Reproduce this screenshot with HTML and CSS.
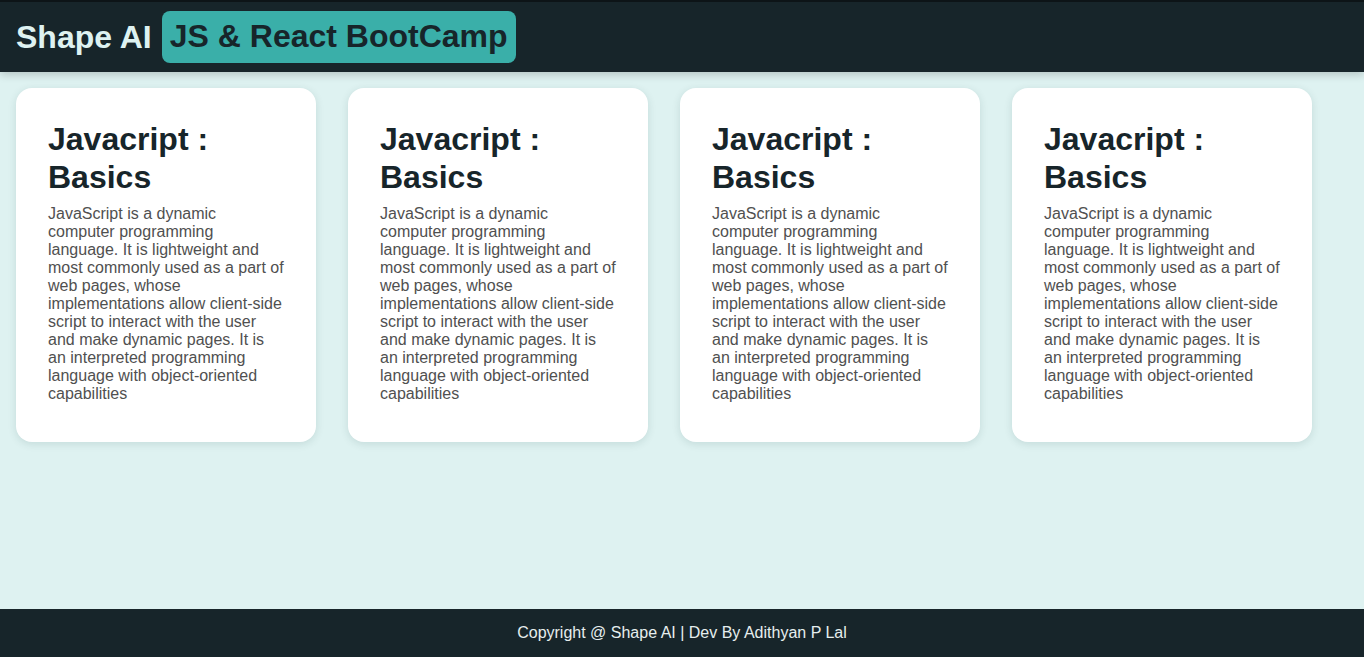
FILE: index.html
```html
<!DOCTYPE html>
<html>
<head>
<meta charset="utf-8">
<link rel="stylesheet" href="styles.css">
</head>
<body>
<header class="topbar">
  <span class="brand">Shape AI</span>
  <span class="badge">JS &amp; React BootCamp</span>
</header>
<main class="cards">
  <div class="card">
    <h1 class="card-title">Javacript : Basics</h1>
    <p class="card-text">JavaScript is a dynamic computer programming language. It is lightweight and most commonly used as a part of web pages, whose implementations allow client-side script to interact with the user and make dynamic pages. It is an interpreted programming language with object-oriented capabilities</p>
  </div>
  <div class="card">
    <h1 class="card-title">Javacript : Basics</h1>
    <p class="card-text">JavaScript is a dynamic computer programming language. It is lightweight and most commonly used as a part of web pages, whose implementations allow client-side script to interact with the user and make dynamic pages. It is an interpreted programming language with object-oriented capabilities</p>
  </div>
  <div class="card">
    <h1 class="card-title">Javacript : Basics</h1>
    <p class="card-text">JavaScript is a dynamic computer programming language. It is lightweight and most commonly used as a part of web pages, whose implementations allow client-side script to interact with the user and make dynamic pages. It is an interpreted programming language with object-oriented capabilities</p>
  </div>
  <div class="card">
    <h1 class="card-title">Javacript : Basics</h1>
    <p class="card-text">JavaScript is a dynamic computer programming language. It is lightweight and most commonly used as a part of web pages, whose implementations allow client-side script to interact with the user and make dynamic pages. It is an interpreted programming language with object-oriented capabilities</p>
  </div>
</main>
<footer class="footer">Copyright @ Shape AI | Dev By Adithyan P Lal</footer>
</body>
</html>
```
FILE: styles.css
```css
html, body {
  margin: 0;
  padding: 0;
  height: 100%;
}
body {
  background: #def2f1;
  font-family: "Liberation Sans", Arial, sans-serif;
  display: flex;
  flex-direction: column;
}
.topbar {
  background: #17252a;
  border-top: 2px solid #0d1417;
  box-sizing: border-box;
  padding: 9px 16px 0;
  display: flex;
  align-items: flex-start;
  gap: 10px;
  box-shadow: 0 3px 8px rgba(0, 0, 0, 0.18);
  position: relative;
  z-index: 1;
  height: 72px;
}
.brand {
  color: #def2f1;
  font-size: 32px;
  font-weight: bold;
  line-height: 52px;
}
.badge {
  background: #3aafa9;
  color: #17252a;
  font-size: 32px;
  font-weight: bold;
  line-height: 37px;
  padding: 7px 8px 8px;
  border-radius: 8px;
}
.cards {
  flex: 1;
  display: flex;
  align-items: flex-start;
  gap: 32px;
  padding: 16px;
}
.card {
  width: 300px;
  height: 354px;
  box-sizing: border-box;
  background: #ffffff;
  border-radius: 16px;
  padding: 32px;
  box-shadow: 0 2px 8px rgba(0, 60, 60, 0.12);
}
.card-title {
  margin: 0;
  font-size: 32px;
  line-height: 38px;
  color: #17252a;
  font-weight: bold;
}
.card-text {
  margin: 8px 0 0;
  padding-top: 1px;
  font-size: 16px;
  line-height: 18px;
  color: #505050;
}
.footer {
  background: #17252a;
  color: #e6eeee;
  height: 48px;
  text-align: center;
  font-size: 16px;
  line-height: 48px;
}
```
